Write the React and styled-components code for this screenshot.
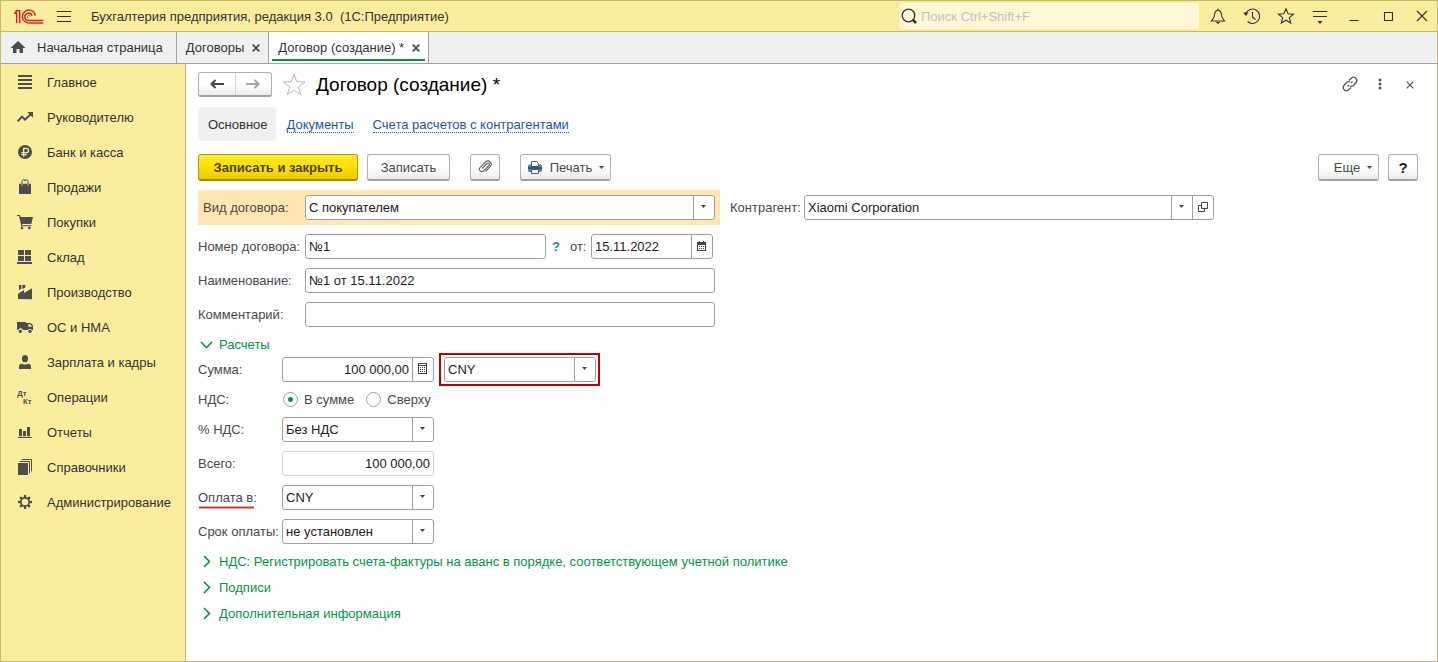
import React from "react";
import styled, { createGlobalStyle, css } from "styled-components";

const GlobalStyle = createGlobalStyle`
  *, *::before, *::after { box-sizing: border-box; }
  body { margin: 0; }
  body, button, input, select {
    font-family: "Liberation Sans", Arial, sans-serif;
    font-size: 13px;
    line-height: 17px;
    color: #4a4a4a;
  }
  button { margin: 0; padding: 0; border: 0; background: none; cursor: pointer; }
  svg { display: block; flex: none; }
`;

const c = {
  yellow: "#fbed9e",
  yellowLine: "#c8b96c",
  grayLine: "#a0a0a0",
  icon: "#4d4d4d",
  ink: "#333333",
  green: "#009646",
  link: "#1c55b4",
};

/* ---------- window frame ---------- */

const Window = styled.div`
  min-height: 100vh;
  display: flex;
  flex-direction: column;
  border: 1px solid ${c.yellowLine};
  background: #fff;
`;

const TitleBar = styled.header`
  display: flex;
  align-items: center;
  height: 31px;
  padding: 0 3px 0 12px;
  background: ${c.yellow};
  border-bottom: 1px solid ${c.yellowLine};
`;

const AppTitle = styled.span`
  margin-left: 19px;
  flex: 1;
  color: ${c.ink};
  white-space: pre;
`;

const MenuButton = styled.button`
  margin-left: 12px;
`;

const SearchBox = styled.label`
  display: flex;
  align-items: center;
  gap: 4px;
  width: 300px;
  height: 26px;
  padding-left: 2px;
  margin-right: 7px;
  border-radius: 3px;
  background: #fef7d6;
`;

const SearchInput = styled.input`
  flex: 1;
  min-width: 0;
  padding: 0;
  border: 0;
  outline: 0;
  background: none;
  &::placeholder { color: #c2c2c2; opacity: 1; }
`;

const TitleActions = styled.div`
  display: flex;
  gap: 10px;
`;

const IconButton = styled.button`
  display: flex;
  align-items: center;
  justify-content: center;
  width: 24px;
  height: 24px;
`;

/* ---------- tabs ---------- */

const TabBar = styled.nav`
  display: flex;
  height: 32px;
  background: #f0f0f0;
  border-bottom: 1px solid ${c.grayLine};
`;

const Tab = styled.div`
  position: relative;
  display: flex;
  align-items: center;
  gap: ${(p) => (p.$home ? 11 : 8)}px;
  padding: 0 ${(p) => (p.$home ? 13 : 8)}px 0 9px;
  border-right: 1px solid ${c.grayLine};
  color: ${c.ink};
  background: ${(p) => (p.$active ? "#fff" : "none")};
  ${(p) =>
    p.$active &&
    css`
      &::after {
        content: "";
        position: absolute;
        left: 3px;
        right: 3px;
        bottom: 2px;
        height: 2px;
        background: ${c.green};
      }
    `}
`;

const TabLabel = styled.button`
  color: inherit;
  white-space: nowrap;
`;

/* ---------- body ---------- */

const Body = styled.div`
  flex: 1;
  display: flex;
`;

const Sidebar = styled.nav`
  flex: none;
  width: 185px;
  padding-top: 1px;
  background: ${c.yellow};
  border-right: 1px solid ${c.yellowLine};
`;

const SideLink = styled.a`
  display: flex;
  align-items: center;
  gap: 13px;
  height: 35px;
  padding: 0 8px 0 16px;
  color: ${c.ink};
  text-decoration: none;
  white-space: nowrap;
`;

const Main = styled.main`
  flex: 1;
  min-width: 0;
  padding: 8px 19px 39px 12px;
`;

const HeadRow = styled.div`
  display: flex;
  align-items: center;
  height: 25px;
`;

const raised = css`
  border: 1px solid #b0b0b0;
  border-bottom: 2px solid #a0a0a0;
  border-radius: 3px;
  background: linear-gradient(#ffffff 50%, #ececec);
`;

const NavPair = styled.div`
  display: flex;
  width: 74px;
  height: 25px;
  ${raised}
`;

const NavButton = styled.button`
  flex: 1;
  display: flex;
  align-items: center;
  justify-content: center;
  & + & { border-left: 1px solid #d4d4d4; }
`;

const Favourite = styled.button`
  margin: 0 10px;
`;

const PageTitle = styled.h1`
  flex: 1;
  margin: 0;
  font-size: 19px;
  line-height: 25px;
  font-weight: 400;
  color: #000;
`;

const HeadActions = styled.div`
  display: flex;
  gap: 6px;
  margin-right: -4px;
`;

const Sections = styled.nav`
  display: flex;
  align-items: center;
  height: 34px;
  margin: 10px 0 13px;
`;

const CurrentSection = styled.span`
  height: 34px;
  padding: 1px 8px 0 10px;
  margin-right: 11px;
  border-radius: 4px;
  line-height: 34px;
  color: ${c.ink};
  background: #f0f0f0;
`;

const SectionLink = styled.a`
  margin-right: 19px;
  padding-top: 2px;
  line-height: 14px;
  color: ${c.link};
  text-decoration: none;
  border-bottom: 1px dotted ${c.link};
`;

const Toolbar = styled.div`
  display: flex;
  align-items: center;
  gap: 9px;
  margin-bottom: 9px;
`;

const Button = styled.button`
  display: flex;
  align-items: center;
  justify-content: center;
  gap: 7px;
  height: 27px;
  min-width: ${(p) => p.$w ?? 30}px;
  white-space: nowrap;
  ${raised}
  ${(p) =>
    p.$primary &&
    css`
      font-weight: 700;
      color: #4a4526;
      border-color: #b39d00;
      border-bottom-color: #a38f00;
      background: linear-gradient(#ffe936, #ffdf00 50%, #eccb00);
    `}
  ${(p) => p.$help && css`font-size: 15px; font-weight: 700; color: #222;`}
`;

const Gap = styled.span`
  width: ${(p) => (p.$grow ? "auto" : "2px")};
  flex: ${(p) => (p.$grow ? 1 : "none")};
`;

/* ---------- form ---------- */

const Form = styled.form`
  display: flex;
  flex-direction: column;
  gap: 9px;
`;

const Line = styled.div`
  display: flex;
  align-items: center;
  min-height: ${(p) => (p.$low ? 17 : 25)}px;
`;

const Band = styled(Line)`
  flex: 0 1 522px;
  padding: 5px;
  margin-right: 10px;
  background: #ffe5b2;
`;

const Label = styled.label`
  position: relative;
  flex: none;
  width: ${(p) => p.$w}px;
  white-space: nowrap;
`;

const Underlined = styled.span`
  &::after {
    content: "";
    position: absolute;
    left: 1px;
    width: 55px;
    top: 17px;
    height: 3px;
    border: solid #e3a79c;
    border-width: 1px 0;
    background: #b8392a;
  }
`;

const RedFrame = styled.div`
  display: flex;
  flex: 0 1 161px;
  min-width: 0;
  margin: -4px 0 -4px 5px;
  padding: 2px 2px 2px 3px;
  border: 2px solid #c00000;
`;

const fieldFrame = css`
  height: 25px;
  border: 1px solid ${(p) => (p.$readOnly ? "#d4d4d4" : c.grayLine)};
  border-radius: 3px;
  background: #fff;
`;

const TextField = styled.input`
  ${fieldFrame}
  flex: 0 1 ${(p) => p.$w}px;
  min-width: 0;
  width: ${(p) => p.$w}px;
  padding: 0 3px;
  color: #222;
  text-align: ${(p) => (p.$right ? "right" : "left")};
`;

const Combo = styled.div`
  ${fieldFrame}
  display: flex;
  flex: 0 1 ${(p) => p.$w}px;
  min-width: 0;
`;

const ComboInput = styled.input`
  flex: 1;
  min-width: 0;
  padding: 0 3px;
  border: 0;
  background: none;
  color: #222;
  text-align: ${(p) => (p.$right ? "right" : "left")};
`;

const cell = css`
  flex: none;
  display: flex;
  align-items: center;
  justify-content: center;
  width: 21px;
  padding: 0 1px 2px 0;
  border-left: 1px solid ${c.grayLine};
`;

const CellButton = styled.button`${cell}`;

const SelectGrid = styled.div`
  flex: 1;
  min-width: 0;
  display: grid;
  grid-template-columns: 1fr 21px;
`;

const Select = styled.select`
  grid-area: 1 / 1 / 2 / 3;
  appearance: none;
  min-width: 0;
  padding: 0 24px 0 3px;
  border: 0;
  background: none;
  color: #222;
`;

const CaretCell = styled.span`
  grid-area: 1 / 2 / 2 / 3;
  pointer-events: none;
  ${cell}
`;

const Hint = styled.button`
  margin: 0 10px 0 6px;
  font-weight: 700;
  color: #1a7fc4;
`;

const RadioLabel = styled.label`
  display: flex;
  align-items: center;
  gap: 6px;
  margin: 0 11px 0 1px;
`;

const Radio = styled.input`
  appearance: none;
  width: 15px;
  height: 15px;
  margin: 0;
  border: 1px solid ${c.grayLine};
  border-radius: 50%;
  background: #fff;
  &:checked { background: radial-gradient(circle, ${c.green} 0 2px, #fff 3px); }
`;

const GroupToggle = styled.button`
  display: flex;
  align-items: center;
  gap: 6px;
  height: 17px;
  padding-left: 2px;
  color: ${c.green};
  align-self: flex-start;
  ${(p) => p.$open && css`margin-bottom: -5px;`}
`;

/* ---------- icons ---------- */

const Caret = () => (
  <svg width="5" height="3" viewBox="0 0 5 3" fill="#444"><path d="M0 0h5L2.500 3z" /></svg>
);

const Cross = ({ size = 8, width = 1.8, color = c.icon }) => (
  <svg width={size} height={size} viewBox="0 0 8 8" stroke={color} strokeWidth={width} fill="none">
    <path d="M.7.7l6.600 6.600M7.300.7L.7 7.300" />
  </svg>
);

const Logo = () => (
  <svg width="31" height="17" viewBox="0 0 93 51" fill="none" stroke="#d8232a" strokeWidth="4.500">
    <path d="M3 16h8v30M8 8h12v38M9 8v8" />
    <path d="M67 23A19.500 19.500 0 1 0 47 45H91" />
    <path d="M57 23A11 11 0 1 0 47 37.500H91" />
    <path d="M52 26a4.500 4.500 0 1 0-5 5" strokeWidth="2.500" stroke="#e0574a" />
  </svg>
);

const Chevron = ({ open }) => (
  <svg width="13" height="13" viewBox="0 0 13 13" fill="none" stroke={c.green} strokeWidth="1.600">
    {open ? <path d="M1 4l5.500 5.500L12 4" /> : <path d="M4 1l5.500 5.500L4 12" />}
  </svg>
);

const SideIcon = ({ children }) => (
  <svg width="17" height="17" viewBox="0 0 51 51" fill={c.icon}>{children}</svg>
);

const gearTeeth = [0, 45, 90, 135, 180, 225, 270, 315];

const sideItems = [
  ["Главное", <path d="M3 3h42v6H3zM3 15h42v6H3zM3 27h42v6H3zM3 39h42v6H3z" />],
  ["Руководителю", <><path d="M2 37l13-14 9 9 17-16" fill="none" stroke={c.icon} strokeWidth="6" /><path d="M31 9h17v17z" /></>],
  ["Банк и касса", <><circle cx="24" cy="24" r="21" /><path d="M20 38V13h8a6.500 6.500 0 0 1 0 13H13M13 32h16" fill="none" stroke={c.yellow} strokeWidth="4" /></>],
  ["Продажи", <><path d="M6 14h7v6h4v-6h14v6h4v-6h7v31H6z" /><path d="M15 20V8q0-6 5-6 4 0 4 4 0-4 4-4 5 0 5 6v12" fill="none" stroke={c.icon} strokeWidth="3" /></>],
  ["Покупки", <><path d="M0 3h9l2 6h37l-5 21H15l1 4h27v3H13L6 6H0z" /><circle cx="15" cy="42" r="4" /><circle cx="37" cy="42" r="4" /></>],
  ["Склад", <path d="M3 3h18v15H3zM24 3h18v15H24zM3 21h18v15H3zM24 21h18v15H24zM0 39h45v6H0z" />],
  ["Производство", <path d="M3 45V29l18-11v9l24-14v33zM6 3h7v11l-7 4zM16 3h10l-2 8-8 4z" />],
  ["ОС и НМА", <><path d="M0 9h27v24h-9a8 8 0 0 0-15 0H0zM27 12h14q7 4 7 10v11h-3a8 8 0 0 0-13 0h-5z" /><path d="M34 16h6q4 3 4 7H34z" fill={c.yellow} /><circle cx="10" cy="37" r="5" /><circle cx="39" cy="37" r="5" /></>],
  ["Зарплата и кадры", <><ellipse cx="24" cy="14" rx="9" ry="11" /><path d="M6 45v-8q0-7 10-8 8 5 16 0 10 1 10 8v8z" /></>],
  ["Операции", <g fontFamily="Liberation Sans" fontWeight="700" fontSize="23"><text x="1" y="20">Дт</text><text x="18" y="45">Кт</text></g>],
  ["Отчеты", <path d="M6 15h9v22H6zM18 21h9v16h-9zM30 9h9v28h-9zM3 39h42v3H3z" />],
  ["Справочники", <><path d="M3 12h30v36H3z" /><path d="M8 7.500h29.500V43M14 1.500h29.500V37" fill="none" stroke={c.icon} strokeWidth="3" /></>],
  ["Администрирование", <g fill="none" stroke={c.icon}><circle cx="24" cy="24" r="12.500" strokeWidth="5" />{gearTeeth.map((a) => <path key={a} d="M24 3v8" strokeWidth="7" transform={`rotate(${a} 24 24)`} />)}</g>],
];

const TitleIcon = ({ children }) => (
  <svg width="18" height="18" viewBox="0 0 18 18" fill="none" stroke="#333" strokeWidth="1.100">{children}</svg>
);

const titleActions = [
  ["Уведомления", <><path d="M2.500 14h13l-2-3Q12.500 9 12.300 6.500 12 4 9 3 6 4 5.700 6.500 5.500 9 4.500 11zM9 1.500V3" /><path d="M6.500 15h5L9 17z" fill="#333" stroke="none" /></>],
  ["История", <><path d="M2.800 6.500A7.200 7.200 0 1 1 4.500 14.500" /><path d="M0 5.500l5.500 0-2.500 3.500z" fill="#333" stroke="none" /><path d="M9.500 5v5l3 2.500" /></>],
  ["Избранное", <path d="M9 1.800l2.100 5 5.400.4-4.100 3.500 1.300 5.300L9 13.200 4.300 16l1.300-5.300L1.500 7.200l5.400-.4z" />],
  ["Настройки", <><path d="M2 4.500h14M2 9.500h14" /><path d="M6.500 14h5L9 17z" fill="#333" stroke="none" /></>],
  ["Свернуть", <path d="M4.500 13.500h9" />],
  ["Развернуть", <path d="M5.500 5.500h8v8h-8z" />],
  ["Закрыть", <path d="M4 4l10 10M14 4L4 14" />],
];

const Arrow = ({ left, color }) => (
  <svg width="16" height="12" viewBox="0 0 16 12" fill="none" stroke={color} strokeWidth="2">
    <path d={left ? "M15 6H3M6.500 2L2.500 6l4 4" : "M1 6h12M9.500 2l4 4-4 4"} />
  </svg>
);

/* ---------- composed fields ---------- */

const Dropdown = ({ id, value, w, label, children }) => (
  <Combo $w={w}>
    <SelectGrid>
      <Select id={id} aria-label={label} defaultValue={value}><option>{value}</option></Select>
      <CaretCell><Caret /></CaretCell>
    </SelectGrid>
    {children}
  </Combo>
);

export default function App() {
  return (
    <>
      <GlobalStyle />
      <Window>
        <TitleBar>
          <Logo />
          <MenuButton aria-label="Меню">
            <svg width="16" height="13" viewBox="0 0 16 13" fill="#333"><path d="M1 1h14v1H1zM1 6h14v1H1zM1 11h14v1H1z" /></svg>
          </MenuButton>
          <AppTitle>Бухгалтерия предприятия, редакция 3.0  (1С:Предприятие)</AppTitle>
          <SearchBox>
            <svg width="16" height="16" viewBox="0 0 16 16" fill="none" stroke="#333" strokeWidth="1.300"><circle cx="7.500" cy="7.500" r="6.300" /><path d="M11.500 11.500l3.500 3.500" strokeWidth="2.500" /></svg>
            <SearchInput aria-label="Поиск" placeholder="Поиск Ctrl+Shift+F" />
          </SearchBox>
          <TitleActions>
            {titleActions.map(([name, icon]) => (
              <IconButton key={name} aria-label={name}><TitleIcon>{icon}</TitleIcon></IconButton>
            ))}
          </TitleActions>
        </TitleBar>

        <TabBar>
          <Tab $home>
            <svg width="16" height="16" viewBox="0 0 16 16" fill={c.icon}><path d="M8 1l7.500 7H13v5H9.500V9h-3v4H3V8H.5z" /></svg>
            <TabLabel>Начальная страница</TabLabel>
          </Tab>
          <Tab>
            <TabLabel>Договоры</TabLabel>
            <button aria-label="Закрыть вкладку"><Cross /></button>
          </Tab>
          <Tab $active>
            <TabLabel>Договор (создание) *</TabLabel>
            <button aria-label="Закрыть вкладку"><Cross /></button>
          </Tab>
        </TabBar>

        <Body>
          <Sidebar>
            {sideItems.map(([name, icon]) => (
              <SideLink key={name} href="#"><SideIcon>{icon}</SideIcon>{name}</SideLink>
            ))}
          </Sidebar>

          <Main>
            <HeadRow>
              <NavPair>
                <NavButton aria-label="Назад"><Arrow left color="#444" /></NavButton>
                <NavButton aria-label="Вперед"><Arrow color="#a6a6a6" /></NavButton>
              </NavPair>
              <Favourite aria-label="В избранное">
                <svg width="24" height="23" viewBox="0 0 24 23" fill="none" stroke="#b4b8be" strokeWidth="1"><path d="M12 1l2.700 7.800 8.300.2-6.700 4.900 2.400 7.700-6.700-4.600-6.700 4.600 2.400-7.700L1 9l8.300-.2z" /></svg>
              </Favourite>
              <PageTitle>Договор (создание) *</PageTitle>
              <HeadActions>
                <IconButton aria-label="Ссылка">
                  <svg width="16" height="18" viewBox="0 0 16 18" fill="none" stroke="#555" strokeWidth="1.300"><path d="M7 4.500L9.500 2a3.200 3.200 0 0 1 4.500 4.500L11.500 9.500Q9.500 11 8 10M9 11.500L6.500 14A3.200 3.200 0 0 1 2 9.500L4.500 6.500Q6.500 5 8 6M5.500 10.500l1.500-1.500M9 7l1.500-1.500" /></svg>
                </IconButton>
                <IconButton aria-label="Ещё">
                  <svg width="4" height="14" viewBox="0 0 4 14" fill="#555"><circle cx="2" cy="2" r="1.500" /><circle cx="2" cy="6" r="1.500" /><circle cx="2" cy="10" r="1.500" /></svg>
                </IconButton>
                <IconButton aria-label="Закрыть"><Cross width={1.2} color="#555" /></IconButton>
              </HeadActions>
            </HeadRow>

            <Sections>
              <CurrentSection>Основное</CurrentSection>
              <SectionLink href="#">Документы</SectionLink>
              <SectionLink href="#">Счета расчетов с контрагентами</SectionLink>
            </Sections>

            <Toolbar>
              <Button $primary $w={160}>Записать и закрыть</Button>
              <Button $w={83}>Записать</Button>
              <Gap />
              <Button aria-label="Файлы">
                <svg width="16" height="16" viewBox="0 0 16 16" fill="none" stroke="#666" strokeWidth="1.100"><path d="M5 9.500l5-5a1.400 1.400 0 0 1 2 2L6.500 12A2.500 2.500 0 0 1 3 8.500L8.500 3a3.300 3.300 0 0 1 4.700 4.700L8.500 12.500" /></svg>
              </Button>
              <Gap />
              <Button $w={91}>
                <svg width="16" height="15" viewBox="0 0 16 15"><path d="M2 4.500h12l1 1V11l-1 1H2l-1-1V5.500z" fill="#5b82a5" /><path d="M1 7h14v2H1z" fill="#2e5a82" /><path d="M4.500 1.500H9.500l2 2V6.500h-7zM4.500 9.500h7v4h-7z" fill="#fff" stroke="#38618a" /></svg>
                Печать
                <Caret />
              </Button>
              <Gap $grow />
              <Button $w={61}><Gap />Еще<Caret /></Button>
              <Button $help>?</Button>
            </Toolbar>

            <Form onSubmit={(e) => e.preventDefault()}>
              <Line>
                <Band>
                  <Label $w={102} htmlFor="kind">Вид договора:</Label>
                  <Dropdown id="kind" value="С покупателем" w={410} />
                </Band>
                <Label $w={74} htmlFor="partner">Контрагент:</Label>
                <Dropdown id="partner" value="Xiaomi Corporation" w={410}>
                  <CellButton type="button" aria-label="Открыть">
                    <svg width="10" height="10" viewBox="0 0 10 10" fill="none" stroke="#444"><path d="M3.500.5h6v6h-6zM3.500 3.500h-3v6h6v-3" /></svg>
                  </CellButton>
                </Dropdown>
              </Line>
              <Line>
                <Label $w={107} htmlFor="number">Номер договора:</Label>
                <TextField $w={241} id="number" defaultValue="№1" />
                <Hint type="button">?</Hint>
                <Label $w={21} htmlFor="date">от:</Label>
                <Combo $w={122}>
                  <ComboInput id="date" defaultValue="15.11.2022" />
                  <CellButton type="button" aria-label="Календарь">
                    <svg width="9" height="10" viewBox="0 0 9 10" fill="#444"><path d="M0 1h2V0h1v1h3V0h1v1h2v9H0zm1 3v5h7V4z" fillRule="evenodd" /><path d="M2 5h1v1H2zM4 5h1v1H4zM6 5h1v1H6zM2 7h1v1H2zM4 7h1v1H4zM6 7h1v1H6z" /></svg>
                  </CellButton>
                </Combo>
              </Line>
              <Line>
                <Label $w={107} htmlFor="name">Наименование:</Label>
                <TextField $w={410} id="name" defaultValue="№1 от 15.11.2022" />
              </Line>
              <Line>
                <Label $w={107} htmlFor="comment">Комментарий:</Label>
                <TextField $w={410} id="comment" />
              </Line>

              <GroupToggle type="button" $open><Chevron open />Расчеты</GroupToggle>
              <Line>
                <Label $w={84} htmlFor="sum">Сумма:</Label>
                <Combo $w={152}>
                  <ComboInput $right id="sum" defaultValue="100 000,00" />
                  <CellButton type="button" aria-label="Калькулятор">
                    <svg width="9" height="11" viewBox="0 0 9 11" fill="#444"><path d="M0 0h9v11H0zm1 1v1h7V1zm0 2v7h7V3z" fillRule="evenodd" /><path d="M2 4h1v1H2zM4 4h1v1H4zM6 4h1v1H6zM2 6h1v1H2zM4 6h1v1H4zM6 6h1v1H6zM2 8h1v1H2zM4 8h1v1H4zM6 8h1v1H6z" /></svg>
                  </CellButton>
                </Combo>
                <RedFrame><Dropdown label="Валюта" value="CNY" w={152} /></RedFrame>
              </Line>
              <Line $low role="radiogroup" aria-labelledby="vat-label">
                <Label as="span" id="vat-label" $w={84}>НДС:</Label>
                <RadioLabel><Radio type="radio" name="vat" defaultChecked />В сумме</RadioLabel>
                <RadioLabel><Radio type="radio" name="vat" />Сверху</RadioLabel>
              </Line>
              <Line>
                <Label $w={84} htmlFor="rate">% НДС:</Label>
                <Dropdown id="rate" value="Без НДС" w={152} />
              </Line>
              <Line>
                <Label $w={84} htmlFor="total">Всего:</Label>
                <TextField $w={152} $right $readOnly readOnly id="total" defaultValue="100 000,00" />
              </Line>
              <Line>
                <Label $w={84} htmlFor="pay"><Underlined>Оплата в:</Underlined></Label>
                <Dropdown id="pay" value="CNY" w={152} />
              </Line>
              <Line>
                <Label $w={84} htmlFor="term">Срок оплаты:</Label>
                <Dropdown id="term" value="не установлен" w={152} />
              </Line>

              <GroupToggle type="button"><Chevron />НДС: Регистрировать счета-фактуры на аванс в порядке, соответствующем учетной политике</GroupToggle>
              <GroupToggle type="button"><Chevron />Подписи</GroupToggle>
              <GroupToggle type="button"><Chevron />Дополнительная информация</GroupToggle>
            </Form>
          </Main>
        </Body>
      </Window>
    </>
  );
}
